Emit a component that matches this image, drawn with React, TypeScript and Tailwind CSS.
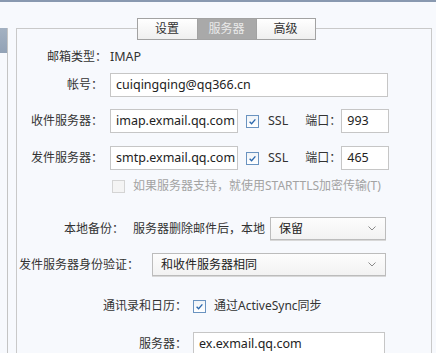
const font = { fontFamily: '"Noto Sans", "Noto Sans CJK SC", sans-serif' };

function Check({ checked = true, disabled = false }: { checked?: boolean; disabled?: boolean }) {
  return (
    <span
      className={
        "flex h-[13px] w-[13px] shrink-0 items-center justify-center border " +
        (disabled ? "border-[#d4d4d4] bg-[#f4f4f4]" : "border-[#6a93c0] bg-gradient-to-b from-[#f0f4f8] to-[#ffffff]")
      }
    >
      {checked && (
        <svg viewBox="0 0 10 10" className="h-[9px] w-[9px]" aria-hidden="true">
          <path d="M1.8 5.2 L4 7.4 L8.2 2.6" fill="none" stroke="#2a67ad" strokeWidth="1.5" />
        </svg>
      )}
    </span>
  );
}

function Field({ value, className }: { value: string; className: string }) {
  return (
    <div className={"flex h-[24px] items-center overflow-hidden whitespace-nowrap border border-[#c6c6c6] bg-white pl-[5px] text-[12.5px] text-[#222] " + className}>
      {value}
    </div>
  );
}

function Select({ value, className }: { value: string; className: string }) {
  return (
    <div
      className={
        "flex h-[23px] items-center justify-between border border-[#bcbcbc] bg-gradient-to-b from-[#fdfdfd] to-[#f2f2f2] pl-[8px] pr-[9px] text-[12px] text-[#222] shadow-[0_1px_0_#d8d8d8] " +
        className
      }
    >
      <span>{value}</span>
      <svg viewBox="0 0 8 5" className="h-[5px] w-[8px]" aria-hidden="true">
        <path d="M0.5 0.5 L4 4 L7.5 0.5" fill="none" stroke="#8a8a8a" strokeWidth="1" />
      </svg>
    </div>
  );
}

function Label({ text, className }: { text: string; className: string }) {
  return <div className={"shrink-0 text-right text-[12px] text-[#333] " + className}>{text}</div>;
}

export default function App() {
  return (
    <div style={font} className="relative h-[353px] w-[436px] overflow-hidden border-t-2 border-[#8999b0] bg-[#f7f9fd]">
      <div className="flex pt-[26px]">
        {/* left side list edge */}
        <div className="flex w-[8px] shrink-0 flex-col border-r border-[#c4c4c4]">
          <div className="h-[25px] bg-gradient-to-b from-[#a3b1c2] to-[#92a2b6]" />
          <div className="h-[300px]" />
        </div>

        {/* group box */}
        <div className="ml-[8px] h-[340px] w-[416px] border border-[#c9c9c9]">
          <div className="-mt-[11px] flex justify-center pl-[4px]">
            <div className="flex h-[22px] border border-[#a2a2a2] text-[12px]">
              <div className="flex w-[59px] items-center justify-center bg-gradient-to-b from-[#ffffff] to-[#efefef] text-[#333]">设置</div>
              <div className="flex w-[60px] items-center justify-center border-x border-[#a2a2a2] bg-[#a9a9a9] text-[#e9e9e9]">服务器</div>
              <div className="flex w-[58px] items-center justify-center bg-gradient-to-b from-[#ffffff] to-[#efefef] text-[#333]">高级</div>
            </div>
          </div>

          <div className="flex flex-col">
            <div className="mt-[8px] flex h-[18px] items-center">
              <Label text="邮箱类型：" className="w-[90px]" />
              <span className="ml-[3px] text-[12.5px] text-[#333]">IMAP</span>
            </div>

            <div className="mt-[7px] flex items-center">
              <Label text="帐号：" className="w-[86px]" />
              <Field value="cuiqingqing@qq366.cn" className="ml-[7px] w-[278px]" />
            </div>

            <div className="mt-[12px] flex items-center">
              <Label text="收件服务器：" className="w-[86px]" />
              <Field value="imap.exmail.qq.com" className="ml-[7px] w-[128px]" />
              <span className="ml-[8px]"><Check /></span>
              <span className="ml-[9px] text-[12.5px] text-[#333]">SSL</span>
              <span className="ml-[17px] text-[12px] text-[#333]">端口：</span>
              <Field value="993" className="ml-[0px] w-[48px]" />
            </div>

            <div className="mt-[13px] flex items-center">
              <Label text="发件服务器：" className="w-[86px]" />
              <Field value="smtp.exmail.qq.com" className="ml-[7px] w-[128px]" />
              <span className="ml-[8px]"><Check /></span>
              <span className="ml-[9px] text-[12.5px] text-[#333]">SSL</span>
              <span className="ml-[17px] text-[12px] text-[#333]">端口：</span>
              <Field value="465" className="ml-[0px] w-[48px]" />
            </div>

            <div className="mt-[9px] flex h-[14px] items-center pl-[95px]">
              <Check checked={false} disabled />
              <span className="ml-[8px] text-[12px] text-[#a3a3a3]">如果服务器支持，就使用STARTTLS加密传输(T)</span>
            </div>

            <div className="mt-[24px] flex items-center">
              <Label text="本地备份：" className="w-[107px]" />
              <span className="ml-[9px] text-[12px] text-[#333]">服务器删除邮件后，本地</span>
              <Select value="保留" className="ml-[5px] w-[116px]" />
            </div>

            <div className="mt-[13px] flex items-center">
              <Label text="发件服务器身份验证：" className="w-[122px] pl-[1px] text-left" />
              <Select value="和收件服务器相同" className="ml-[13px] w-[234px]" />
            </div>

            <div className="mt-[21px] flex items-center">
              <Label text="通讯录和日历：" className="w-[170px]" />
              <span className="ml-[6px]"><Check /></span>
              <span className="ml-[8px] text-[12px] text-[#333]">通过ActiveSync同步</span>
            </div>

            <div className="mt-[17px] flex items-center">
              <Label text="服务器：" className="w-[170px]" />
              <Field value="ex.exmail.qq.com" className="ml-[6px] w-[192px]" />
            </div>
          </div>
        </div>
      </div>
    </div>
  );
}
